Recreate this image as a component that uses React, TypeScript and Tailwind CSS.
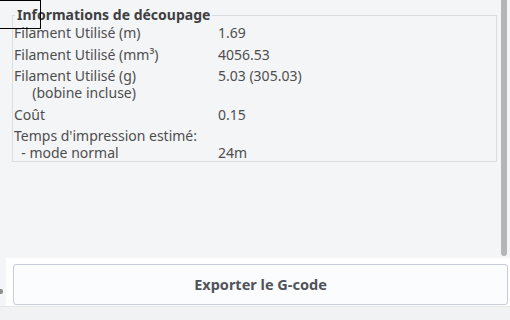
import React from "react";

const rows: { label: string[]; value: string }[] = [
  { label: ["Filament Utilisé (m)"], value: "1.69" },
  { label: ["Filament Utilisé (mm³)"], value: "4056.53" },
  { label: ["Filament Utilisé (g)", "     (bobine incluse)"], value: "5.03 (305.03)" },
  { label: ["Coût"], value: "0.15" },
  { label: ["Temps d'impression estimé:", "  - mode normal"], value: "24m" },
];

export default function App() {
  return (
    <div
      className="relative w-[510px] h-[320px] overflow-hidden bg-[#f4f5f7] flex flex-col text-[14px] text-[#4e4e4e]"
      style={{ fontFamily: '"Noto Sans", "Open Sans", sans-serif' }}
    >
      <div className="flex h-[258px]">
        <div className="w-[501px] pl-[12px] pt-[6px]">
          <fieldset className="w-[485px] h-[156px] border border-[#dcdde1] m-0 p-0">
            <legend className="ml-[2px] px-[2px] leading-[18px] font-bold text-[#3f3f42]">
              Informations de découpage
            </legend>
            <div className="flex flex-col gap-[4.5px] pl-[1px]">
              {rows.map((r, i) => (
                <div key={i} className="flex leading-[17px]">
                  <div className="w-[204px] flex flex-col whitespace-pre">
                    {r.label.map((l, j) => (
                      <span key={j}>{l}</span>
                    ))}
                  </div>
                  <div className={r.label.length > 1 ? "flex flex-col" : ""}>
                    {r.label.length > 1 && i === 4 ? <span>&nbsp;</span> : null}
                    <span>{r.value}</span>
                  </div>
                </div>
              ))}
            </div>
          </fieldset>
        </div>
        <div className="w-[6px] h-[256px] bg-[#b4b4b9] rounded-b-[3px]" />
      </div>
      <div className="h-[48px] ml-[6px] bg-white pt-[6px] pl-[7px] pr-[2px] pb-[1px] flex">
        <button className="flex-1 h-[41px] rounded-[3px] border border-[#c6ccd9] bg-[#fbfcfd] font-bold text-[14.5px] text-[#50535b] flex items-center justify-center">
          Exporter le G-code
        </button>
      </div>
      <div className="flex-1 bg-[#f1f2f4] border-t border-[#e4e5e8]" />
      <div className="absolute left-0 top-0 w-[41px] h-[29px] border-t border-r border-b border-black" />
      <div className="absolute left-0 top-[289px] w-[3px] h-[5px] rounded-r-[2px] bg-[#8c8c8c]" />
    </div>
  );
}
